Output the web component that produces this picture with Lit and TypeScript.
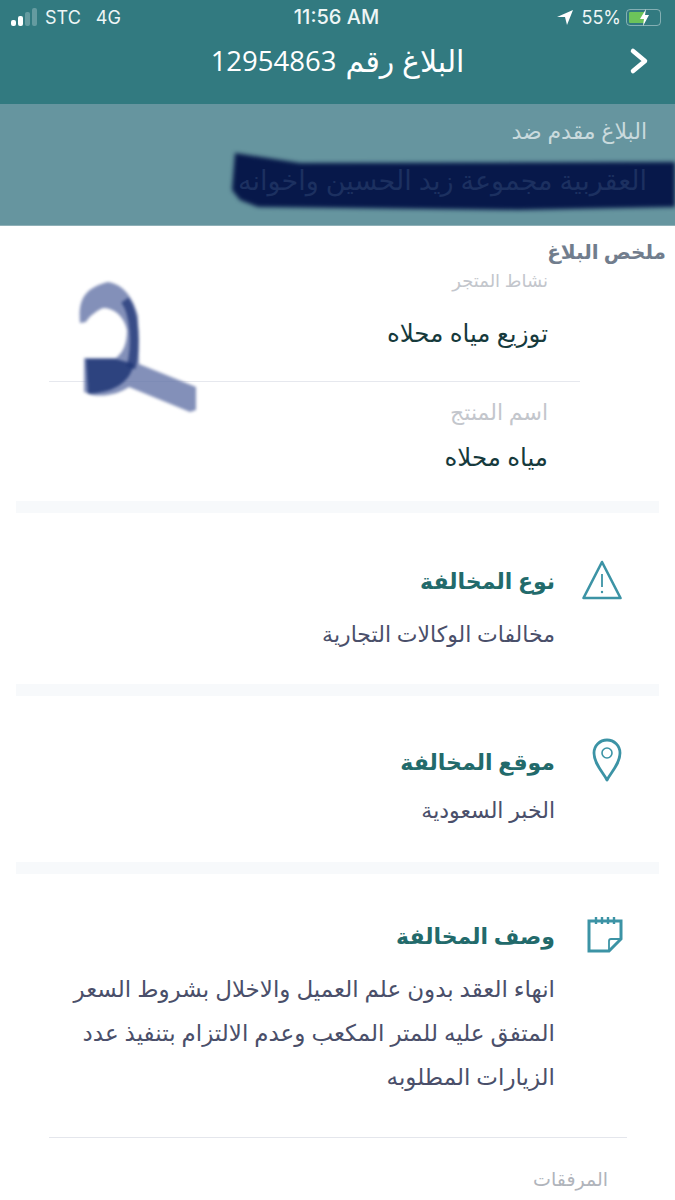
import { LitElement, html, css, svg } from 'lit';
import { customElement } from 'lit/decorators.js';

const warningIcon = svg`
  <svg class="icon" width="40" height="40" viewBox="0 0 40 40" fill="none" stroke="#3c93a5">
    <path d="M20 2 L38.5 38 H1.5 Z" stroke-width="2.6" stroke-linejoin="round" />
    <path d="M20 14 V27" stroke-width="1.8" />
    <circle cx="20" cy="32" r="1.2" fill="#3c93a5" stroke="none" />
  </svg>`;

const pinIcon = svg`
  <svg class="icon" width="30" height="44" viewBox="0 0 30 44" fill="none" stroke="#3c93a5">
    <path d="M15 42 C11 34 2 26 2 15 A13 13 0 0 1 28 15 C28 26 19 34 15 42 Z" stroke-width="2.8" stroke-linejoin="round" />
    <circle cx="15" cy="15" r="5" stroke-width="1.6" />
  </svg>`;

const noteIcon = svg`
  <svg class="icon" width="36" height="37" viewBox="0 0 36 37" fill="none" stroke="#3c93a5">
    <path d="M22 35 H2 V5 H34 V23 Z" stroke-width="3" stroke-linejoin="miter" />
    <path d="M34 23 H24 Q22 23 22 25 V35" stroke-width="1.8" />
    <path d="M9 1 V8 M15 1 V8 M21 1 V8 M27 1 V8" stroke-width="2.4" />
  </svg>`;

@customElement('app-root')
export class AppRoot extends LitElement {
  static styles = css`
    :host {
      display: block;
      position: relative;
      width: 675px;
      height: 1200px;
      overflow: hidden;
      background: #fff;
      font-family: 'Open Sans', 'DejaVu Sans', sans-serif;
      direction: rtl;
    }

    .top {
      background: #327a80;
      height: 104px;
      color: #fff;
    }

    .status {
      direction: ltr;
      display: grid;
      grid-template-columns: 1fr auto 1fr;
      align-items: center;
      height: 34px;
      padding: 0 9px 0 11px;
      font-family: Inter, Roboto, sans-serif;
      font-size: 18px;
      color: #eef6f6;
    }

    .carrier {
      display: flex;
      align-items: center;
      gap: 15px;
    }

    .signal {
      display: flex;
      align-items: flex-end;
      gap: 2px;
      height: 18px;
      margin-right: -7px;
    }

    .signal span {
      width: 5px;
      border-radius: 2px;
      background: #fff;
    }

    .signal span.off {
      background: rgba(255, 255, 255, 0.25);
    }

    .time {
      font-size: 20px;
      font-weight: 500;
      margin-left: -4px;
    }

    .right {
      display: flex;
      justify-content: flex-end;
      align-items: center;
      gap: 8px;
    }

    .battery {
      position: relative;
      display: block;
      width: 35px;
      height: 17px;
      margin-left: -3px;
      margin-right: 5px;
      border: 1.5px solid rgba(255, 255, 255, 0.4);
      border-radius: 4px;
      box-sizing: border-box;
    }

    .battery .level {
      position: absolute;
      left: 2px;
      top: 2px;
      bottom: 2px;
      width: 16px;
      border-radius: 1px;
      background: #6cc35a;
    }

    .battery svg {
      position: absolute;
      left: 12px;
      top: -1px;
    }

    .nav {
      position: relative;
      display: flex;
      justify-content: center;
      gap: 9px;
      height: 56px;
      padding-top: 5px;
      box-sizing: border-box;
      font-size: 30px;
      line-height: 44px;
    }

    .nav .number {
      font-size: 27.5px;
    }

    .nav .back {
      position: absolute;
      right: 26px;
      top: 13px;
    }

    .against {
      position: relative;
      background: #66959f;
      height: 122px;
      padding: 12px 28px 0 0;
      box-sizing: border-box;
      border-bottom: 1px solid #8fb0b7;
      font-size: 22px;
      line-height: 28px;
      color: #c9dadd;
    }

    .against .name {
      position: relative;
      margin-top: 18px;
      font-size: 27px;
      line-height: 36px;
      color: #1c3060;
      white-space: nowrap;
    }

    .scribble {
      position: absolute;
      pointer-events: none;
    }

    .summary {
      margin: 0;
      height: 48px;
      padding: 11px 9px 0 0;
      box-sizing: border-box;
      font-size: 20px;
      line-height: 30px;
      font-weight: 600;
      color: #717d8d;
    }

    .shop {
      position: relative;
      height: 227px;
      overflow: hidden;
    }

    .label {
      font-size: 22px;
      line-height: 24px;
      color: #c3c6cc;
    }

    .value {
      font-size: 24.5px;
      line-height: 32px;
      color: #163a3c;
    }

    .field.first {
      margin: -6px 95px 0 49px;
      padding: 0 32px 32px 0;
      border-bottom: 1px solid #e6e8ee;
    }

    .field.first .label {
      font-size: 18px;
    }

    .field.first .value {
      margin-top: 25px;
    }

    .field.second {
      padding: 17px 127px 0 0;
    }

    .field.second .value {
      margin-top: 18px;
    }

    .band {
      height: 12px;
      margin: 0 16px;
      background: #f7f9fb;
    }

    .row {
      display: flex;
      align-items: flex-start;
      gap: 27px;
      padding: 0 53px 0 0;
    }

    .row .mark {
      flex: none;
      width: 40px;
      display: flex;
    }

    .row h2 {
      margin: 0;
      font-size: 22px;
      line-height: 32px;
      font-weight: 700;
      color: #226a6b;
    }

    .row p {
      margin: 0;
      font-size: 22px;
      color: #4a4f6a;
      white-space: nowrap;
    }

    .row.kind {
      height: 171px;
      padding-top: 51px;
      box-sizing: border-box;
    }

    .row.kind .mark {
      margin-top: -4px;
    }

    .row.place {
      height: 166px;
      padding-top: 49px;
      box-sizing: border-box;
    }

    .row.place .mark {
      margin-top: -7px;
    }

    .row.description {
      padding-top: 45px;
    }

    .row.description .mark {
      margin-top: -3px;
      margin-right: -1px;
      margin-left: 1px;
    }

    .row.kind p,
    .row.place p {
      line-height: 32px;
      margin-top: 21px;
    }

    .row.place p {
      margin-top: 16px;
    }

    .row.description p {
      font-size: 23px;
      line-height: 44px;
      margin-top: 15px;
    }

    .rule {
      margin: 39px 48px 0 49px;
      border-top: 1px solid #e4e6ec;
    }

    .attachments {
      padding: 27px 67px 0 0;
      font-size: 19px;
      line-height: 28px;
      color: #b0b4bb;
    }
  `;

  render() {
    return html`
      <div class="top">
        <div class="status">
          <div class="carrier">
            <div class="signal">
              <span style="height:6px"></span>
              <span style="height:10px"></span>
              <span class="off" style="height:14px"></span>
              <span class="off" style="height:18px"></span>
            </div>
            <span>STC</span>
            <span>4G</span>
          </div>
          <div class="time">11:56 AM</div>
          <div class="right">
            <svg width="16" height="15" viewBox="0 0 16 15"><path d="M16 0 L0 7 H8 L10 15 Z" fill="#fff" /></svg>
            <span>55%</span>
            <span class="battery">
              <span class="level"></span>
              <svg width="11" height="17" viewBox="0 0 11 17"><path d="M7 0 L1 10 H5 L4 17 L10 6 H6 Z" fill="#fff" /></svg>
            </span>
          </div>
        </div>
        <div class="nav">
          <span>البلاغ رقم</span>
          <span class="number">12954863</span>
          <svg class="back" width="20" height="28" viewBox="0 0 20 28" fill="none" stroke="#fff" stroke-width="4.5" stroke-linecap="round" stroke-linejoin="round">
            <path d="M4 4 L16 14 L4 24" />
          </svg>
        </div>
      </div>

      <div class="against">
        <div>البلاغ مقدم ضد</div>
        <svg class="scribble" style="left:228px;top:46px;filter:blur(2px)" width="447" height="70" viewBox="0 0 447 70">
          <path d="M7 3 L72 13 L447 12 V57 L290 60 L30 57 L12 50 L4 40 Z" fill="#07184a" />
        </svg>
        <div class="name">العقربية مجموعة زيد الحسين واخوانه</div>
      </div>

      <h1 class="summary">ملخص البلاغ</h1>

      <div class="shop">
        <div class="field first">
          <div class="label">نشاط المتجر</div>
          <div class="value">توزيع مياه محلاه</div>
        </div>
        <div class="field second">
          <div class="label">اسم المنتج</div>
          <div class="value">مياه محلاه</div>
        </div>
        <svg class="scribble" style="left:70px;top:1px;filter:blur(1.8px)" width="135" height="145" viewBox="70 275 135 145" fill="none" stroke-linejoin="round">
          <path d="M80 323 C78 300 84 288 108 282 C122 284 133 296 138 316 L139 364 L196 387 L196 410 L190 412 L129 387 C118 394 105 397 92 395 L84 392 V358 H116 C124 352 127 342 127 330 C124 316 114 308 103 308 C94 312 88 318 86 322 Z" fill="#6474a8" fill-opacity="0.8" />
          <path d="M125 300 C135 314 137 345 131 368" stroke="#1f3676" stroke-width="9" stroke-opacity="0.75" />
          <path d="M86 359 H116 L134 364 C130 380 118 392 88 394 Z" fill="#1f3676" fill-opacity="0.85" />
        </svg>
      </div>

      <div class="band"></div>
      <div class="row kind">
        <div class="mark">${warningIcon}</div>
        <div>
          <h2>نوع المخالفة</h2>
          <p>مخالفات الوكالات التجارية</p>
        </div>
      </div>

      <div class="band"></div>
      <div class="row place">
        <div class="mark">${pinIcon}</div>
        <div>
          <h2>موقع المخالفة</h2>
          <p>الخبر السعودية</p>
        </div>
      </div>

      <div class="band"></div>
      <div class="row description">
        <div class="mark">${noteIcon}</div>
        <div>
          <h2>وصف المخالفة</h2>
          <p>
            انهاء العقد بدون علم العميل والاخلال بشروط السعر<br />
            المتفق عليه للمتر المكعب وعدم الالتزام بتنفيذ عدد<br />
            الزيارات المطلوبه
          </p>
        </div>
      </div>

      <div class="rule"></div>
      <div class="attachments">المرفقات</div>
    `;
  }
}
